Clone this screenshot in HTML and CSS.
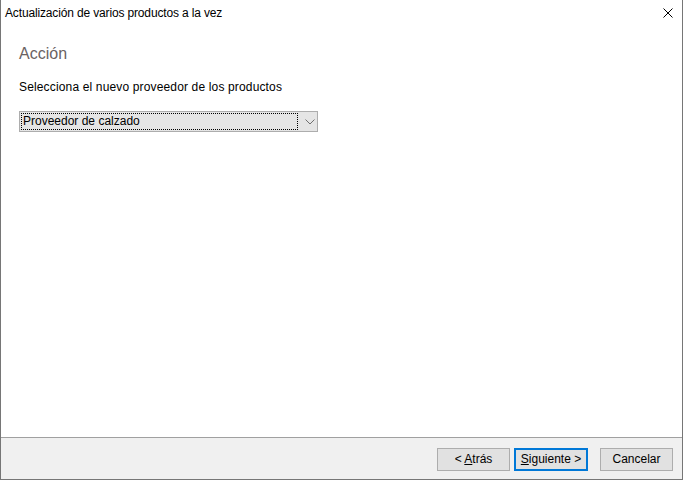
FILE: index.html
```html
<!DOCTYPE html>
<html lang="es">
<head>
<meta charset="utf-8">
<title>Actualización de varios productos a la vez</title>
<link rel="stylesheet" href="styles.css">
</head>
<body>
<div class="window">
  <div class="titlebar">
    <span class="title">Actualización de varios productos a la vez</span>
    <svg class="close" width="10" height="10" viewBox="0 0 10 10"><path d="M0.5 0.5 L9.5 9.5 M9.5 0.5 L0.5 9.5" stroke="#000" stroke-width="1" fill="none"/></svg>
  </div>
  <div class="content">
    <h1 class="heading">Acción</h1>
    <p class="label">Selecciona el nuevo proveedor de los productos</p>
    <div class="combo">
      <span class="combo-value">Proveedor de calzado</span>
      <svg class="chevron" width="10" height="6" viewBox="0 0 10 6"><path d="M0.5 0.5 L5 5 L9.5 0.5" stroke="#707070" stroke-width="1" fill="none"/></svg>
    </div>
  </div>
  <div class="footer">
    <button class="btn">&lt; <u>A</u>trás</button>
    <button class="btn btn-default"><u>S</u>iguiente &gt;</button>
    <button class="btn btn-cancel">Cancelar</button>
  </div>
</div>
</body>
</html>
```

FILE: styles.css
```css
html, body {
  margin: 0;
  padding: 0;
  background: #ffffff;
}
body {
  font-family: "Liberation Sans", Arial, sans-serif;
  font-size: 12px;
  color: #000;
}
.window {
  width: 683px;
  height: 480px;
  box-sizing: border-box;
  border-left: 1px solid #767676;
  border-right: 1px solid #767676;
  border-bottom: 1px solid #767676;
  display: flex;
  flex-direction: column;
  background: #fff;
}
.titlebar {
  height: 30px;
  flex: none;
  display: flex;
  align-items: flex-start;
  justify-content: space-between;
}
.title {
  margin-left: 4px;
  margin-top: 6px;
  line-height: 14px;
  font-size: 12px;
  letter-spacing: -0.15px;
}
.close {
  margin-top: 8px;
  margin-right: 9px;
}
.content {
  flex: 1;
  padding: 14px 0 0 18px;
}
.heading {
  margin: 0;
  font-size: 16px;
  line-height: 20px;
  font-weight: normal;
  color: #6a6262;
}
.label {
  margin: 16px 0 0 0;
  line-height: 15px;
  letter-spacing: 0.15px;
}
.combo {
  margin-top: 16px;
  width: 299px;
  height: 21px;
  box-sizing: border-box;
  border: 1px solid #adadad;
  background: #e5e5e5;
  display: flex;
  align-items: center;
  padding: 1px;
}
.combo-value {
  flex: none;
  width: 277px;
  height: 17px;
  box-sizing: border-box;
  border: 1px dotted #000;
  line-height: 14px;
  padding-left: 1px;
}
.chevron {
  margin-left: 7px;
}
.footer {
  flex: none;
  height: 42px;
  box-sizing: border-box;
  border-top: 1px solid #a0a0a0;
  background: #f0f0f0;
  display: flex;
  justify-content: flex-end;
  align-items: flex-start;
  padding: 10px 9px 0 0;
  gap: 4px;
}
.btn {
  width: 73px;
  height: 23px;
  box-sizing: border-box;
  border: 1px solid #adadad;
  background: #e1e1e1;
  font-family: "Liberation Sans", Arial, sans-serif;
  font-size: 12px;
  color: #000;
  padding: 0;
  margin: 0;
  line-height: 19px;
}
.btn-default {
  border: 2px solid #0078d7;
  width: 74px;
}
.btn-cancel {
  margin-left: 8px;
}
```
